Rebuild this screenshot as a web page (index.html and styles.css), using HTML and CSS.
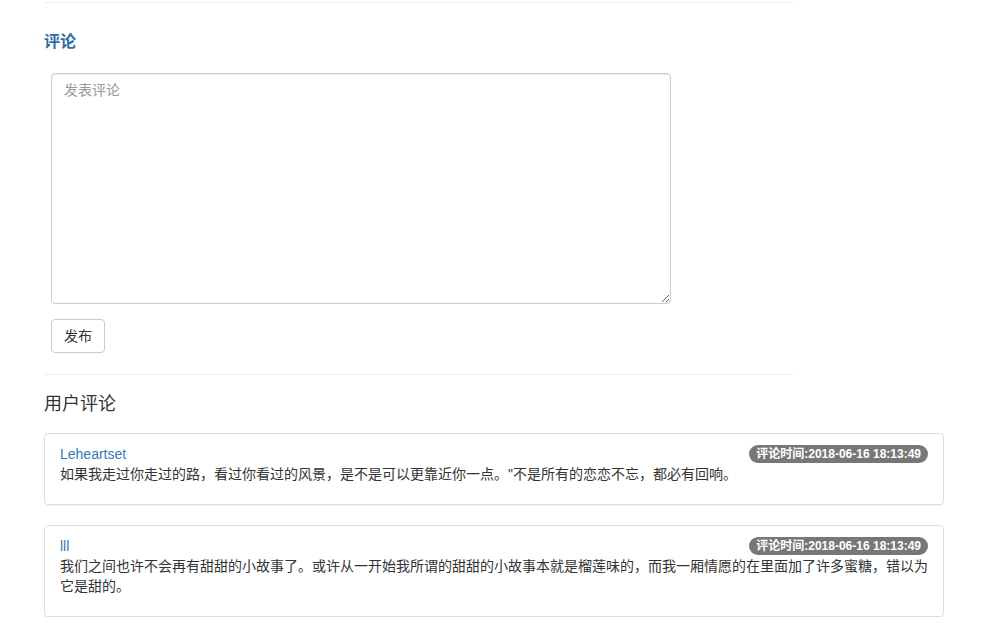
FILE: index.html
```html
<!DOCTYPE html>
<html lang="zh-CN">
<head>
<meta charset="utf-8">
<title>评论</title>
<link rel="stylesheet" href="styles.css">
</head>
<body>
<div class="page">
  <div class="write-section">
    <hr class="rule rule-top">
    <h3 class="section-title">评论</h3>
    <form class="comment-form">
      <textarea class="comment-input" placeholder="发表评论"></textarea>
      <button type="button" class="btn">发布</button>
    </form>
    <hr class="rule rule-mid">
  </div>
  <h4 class="list-title">用户评论</h4>
  <div class="comment-card">
    <span class="badge">评论时间:2018-06-16 18:13:49</span>
    <a class="user" href="#">Leheartset</a>
    <p class="comment-text">如果我走过你走过的路，看过你看过的风景，是不是可以更靠近你一点。"不是所有的恋恋不忘，都必有回响。</p>
  </div>
  <div class="comment-card">
    <span class="badge">评论时间:2018-06-16 18:13:49</span>
    <a class="user" href="#">lll</a>
    <p class="comment-text">我们之间也许不会再有甜甜的小故事了。或许从一开始我所谓的甜甜的小故事本就是榴莲味的，而我一厢情愿的在里面加了许多蜜糖，错以为它是甜的。</p>
  </div>
</div>
</body>
</html>
```
FILE: styles.css
```css
html, body {
  margin: 0;
  padding: 0;
  background: #fff;
}
body {
  font-family: "Liberation Sans", "Noto Sans CJK SC", sans-serif;
  font-size: 14px;
  line-height: 20px;
  color: #333;
}
.page {
  padding-left: 44px;
  width: 900px;
}
.write-section {
  width: 750px;
}
.rule {
  border: 0;
  border-top: 1px solid #eee;
  margin: 0;
  height: 0;
}
.rule-top {
  margin-top: 2px;
}
.section-title {
  margin: 29px 0 0;
  font-size: 16px;
  line-height: 20px;
  font-weight: bold;
  color: #2e6da4;
}
.comment-form {
  margin-top: 21px;
  padding-left: 7px;
}
.comment-input {
  display: block;
  box-sizing: border-box;
  width: 620px;
  height: 231px;
  margin: 0;
  padding: 6px 12px;
  border: 1px solid #ccc;
  border-radius: 4px;
  box-shadow: inset 0 1px 1px rgba(0,0,0,.075);
  font-family: "Liberation Sans", "Noto Sans CJK SC", sans-serif;
  font-size: 14px;
  line-height: 20px;
  color: #555;
  resize: vertical;
}
.comment-input::placeholder {
  color: #999;
}
.btn {
  display: block;
  box-sizing: border-box;
  margin-top: 15px;
  width: 54px;
  height: 34px;
  padding: 6px 12px;
  border: 1px solid #ccc;
  border-radius: 4px;
  background: #fff;
  color: #333;
  font-family: "Liberation Sans", "Noto Sans CJK SC", sans-serif;
  font-size: 14px;
  line-height: 20px;
}
.rule-mid {
  margin-top: 21px;
}
.list-title {
  margin: 18px 0 0;
  font-size: 18px;
  line-height: 22px;
  font-weight: normal;
  color: #333;
}
.comment-card {
  margin-top: 18px;
  padding: 10px 15px 0;
  border: 1px solid #ddd;
  border-radius: 4px;
  box-shadow: 0 1px 1px rgba(0,0,0,.05);
}
.comment-card + .comment-card {
  margin-top: 20px;
}
.user {
  display: block;
  color: #337ab7;
  text-decoration: none;
}
.badge {
  float: right;
  margin-top: 1px;
  padding: 3px 7px;
  font-size: 12px;
  line-height: 12px;
  font-weight: bold;
  color: #fff;
  background: #777;
  border-radius: 10px;
  white-space: nowrap;
}
.comment-text {
  margin: 0 0 20px;
}
```
